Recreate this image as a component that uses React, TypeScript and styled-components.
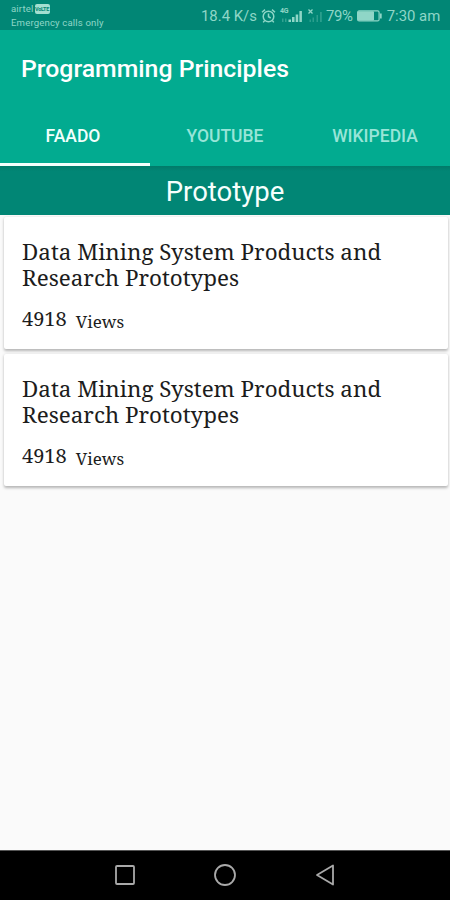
import styled, { createGlobalStyle } from "styled-components"

const GlobalStyle = createGlobalStyle`
  * {
    box-sizing: border-box;
  }

  body {
    margin: 0;
    font-family: Roboto, "Liberation Sans", sans-serif;
    background: #fafafa;
  }
`

const Screen = styled.div`
  display: flex;
  flex-direction: column;
  width: 450px;
  height: 900px;
  overflow: hidden;
  background: #fafafa;
`

const StatusBar = styled.div`
  display: flex;
  justify-content: space-between;
  height: 30px;
  flex-shrink: 0;
  padding: 0 9px 0 11px;
  background: #018675;
  color: #8fd6c7;
`

const Carrier = styled.div`
  padding-top: 4px;
  font-size: 9.6px;
  line-height: 12px;
  letter-spacing: 0.15px;
  white-space: nowrap;
`

const CarrierName = styled.div`
  display: flex;
  align-items: center;
  gap: 1px;
  height: 14px;
  margin-top: -2px;
  margin-bottom: 1px;
`

const VolteBadge = styled.span`
  width: 15px;
  height: 10px;
  border-radius: 2px;
  background: #a3dfd1;
  color: #018675;
  font-size: 5.5px;
  font-weight: 700;
  line-height: 10px;
  letter-spacing: -0.3px;
  text-align: center;
`

const StatusIcons = styled.div`
  display: flex;
  align-items: center;
  height: 32px;
  font-size: 14.9px;
  white-space: nowrap;

  svg {
    display: block;
  }
`

const StatusText = styled.span<{ $width: number; $spacing?: number }>`
  width: ${({ $width }) => $width}px;
  letter-spacing: ${({ $spacing }) => $spacing ?? 0}px;
`

const AppBar = styled.header`
  height: 136px;
  flex-shrink: 0;
  background: #02ab90;
  color: #fff;
`

const Title = styled.h1`
  height: 77px;
  margin: 0;
  padding-left: 21px;
  font-size: 24.8px;
  font-weight: 500;
  line-height: 78px;
`

const Tabs = styled.nav`
  display: grid;
  grid-template-columns: repeat(3, 150px);
  height: 59px;
`

const Tab = styled.div<{ $active?: boolean }>`
  padding-top: 2px;
  padding-right: ${({ $active }) => ($active ? 4 : 0)}px;
  border-bottom: 3px solid ${({ $active }) => ($active ? "#f4fffc" : "transparent")};
  color: ${({ $active }) => ($active ? "#f2fffc" : "#98e5d8")};
  font-size: 17.5px;
  font-weight: 500;
  line-height: 54px;
  text-align: center;
`

const SectionTitle = styled.h2`
  height: 49px;
  flex-shrink: 0;
  margin: 0;
  background: linear-gradient(#017a69, #018675 5px);
  color: #f6fffd;
  font-size: 27.5px;
  font-weight: 400;
  line-height: 52px;
  text-align: center;
`

const CardList = styled.main`
  display: flex;
  flex-direction: column;
  flex: 1;
  gap: 5px;
  padding: 2px 2px 0 4px;
`

const Card = styled.article`
  height: 132px;
  padding: 22px 18px 0;
  border-radius: 2px;
  background: #fff;
  box-shadow: 0 1.5px 3px rgba(0, 0, 0, 0.28);
  color: #1c1c1c;
  font-family: "Noto Serif", "DejaVu Serif Condensed", "DejaVu Serif", serif;
  font-stretch: condensed;
`

const CardTitle = styled.div`
  font-size: 22.4px;
  line-height: 26px;
`

const Views = styled.div`
  display: flex;
  align-items: baseline;
  gap: 9px;
  margin-top: 15px;
  font-size: 20px;
  line-height: 26px;
`

const ViewsLabel = styled.span`
  position: relative;
  top: 2px;
  font-size: 17px;
`

const NavBar = styled.footer`
  display: flex;
  justify-content: center;
  align-items: center;
  height: 50px;
  flex-shrink: 0;
  gap: 76px;
  padding-bottom: 1px;
  border-top: 1px solid #555;
  background: #000;

  svg {
    display: block;
    fill: none;
    stroke: #a9a9a9;
    stroke-width: 1.8;
  }
`

const AlarmIcon = () => (
  <svg width="15" height="16" viewBox="0 0 15 16" fill="none" stroke="currentColor" strokeWidth="1.5">
    <circle cx="7.5" cy="8.5" r="5.3" />
    <path d="M7.5 5.5v3.2l2.2 1.3M1 4.2 4 1.6M14 4.2 11 1.6M3.6 12.6 2.2 14.4M11.4 12.6l1.4 1.8" />
  </svg>
)

const NetworkSignal = styled.div`
  position: relative;
  width: 24px;
  height: 16px;
  margin: 0 3px 0 4px;
`

const NetworkType = styled.span`
  position: absolute;
  top: -1px;
  left: 0;
  font-size: 7px;
  font-weight: 700;
  line-height: 8px;
  letter-spacing: -0.3px;
`

const SignalIcon = () => (
  <NetworkSignal>
    <NetworkType>4G</NetworkType>
    <svg width="24" height="16" viewBox="0 0 24 16" fill="currentColor">
      <path d="M2 10.5h1.5V14H2zM5 10.5h1.5V14H5z" opacity=".35" />
      <path d="M8.5 11.5H11V14H8.5zM12 9h2.5v5H12zM15.7 6.5h2.5V14h-2.5zM19.4 3h2.5v11h-2.5z" />
    </svg>
  </NetworkSignal>
)

const NoSignalIcon = () => (
  <svg width="19" height="16" viewBox="0 0 19 16" fill="currentColor">
    <path d="m1.5 1.5 4 4m0-4-4 4" stroke="currentColor" strokeWidth="1.3" />
    <path d="M2.5 11.5H4V14H2.5zM5.5 9.5H7V14H5.5zM9.5 7H11v7H9.5zM13 4h1.8v10H13z" opacity=".3" />
  </svg>
)

const BatteryIcon = () => (
  <svg width="26" height="12" viewBox="0 0 26 12" fill="none" stroke="currentColor">
    <rect x=".6" y=".9" width="21.5" height="10" rx="1.5" strokeWidth="1.2" />
    <path d="M1.5 1.8h15V10h-15z" fill="currentColor" />
    <path d="M23.8 3.5v5" strokeWidth="1.8" />
  </svg>
)

const tabs = ["FAADO", "YOUTUBE", "WIKIPEDIA"]

const articles = [
  { id: 1, title: "Data Mining System Products and Research Prototypes", views: 4918 },
  { id: 2, title: "Data Mining System Products and Research Prototypes", views: 4918 },
]

const App = () => (
  <Screen>
    <GlobalStyle />
    <StatusBar>
      <Carrier>
        <CarrierName>
          airtel <VolteBadge>VoLTE</VolteBadge>
        </CarrierName>
        <div>Emergency calls only</div>
      </Carrier>
      <StatusIcons>
        <StatusText $width={60}>18.4 K/s</StatusText>
        <AlarmIcon />
        <SignalIcon />
        <NoSignalIcon />
        <StatusText $width={31} $spacing={-0.4}>79%</StatusText>
        <BatteryIcon />
        <StatusText $width={58}>&nbsp;7:30 am</StatusText>
      </StatusIcons>
    </StatusBar>
    <AppBar>
      <Title>Programming Principles</Title>
      <Tabs>
        {tabs.map((tab, i) => (
          <Tab key={tab} $active={i === 0}>
            {tab}
          </Tab>
        ))}
      </Tabs>
    </AppBar>
    <SectionTitle>Prototype</SectionTitle>
    <CardList>
      {articles.map(({ id, title, views }) => (
        <Card key={id}>
          <CardTitle>{title}</CardTitle>
          <Views>
            {views}
            <ViewsLabel>Views</ViewsLabel>
          </Views>
        </Card>
      ))}
    </CardList>
    <NavBar>
      <svg width="24" height="24" viewBox="0 0 24 24">
        <rect x="3" y="3" width="18" height="18" rx="1" />
      </svg>
      <svg width="24" height="24" viewBox="0 0 24 24">
        <circle cx="12" cy="12" r="10" />
      </svg>
      <svg width="24" height="24" viewBox="0 0 24 24">
        <path d="M20 2.5v19L4 12z" strokeLinejoin="round" />
      </svg>
    </NavBar>
  </Screen>
)

export default App
